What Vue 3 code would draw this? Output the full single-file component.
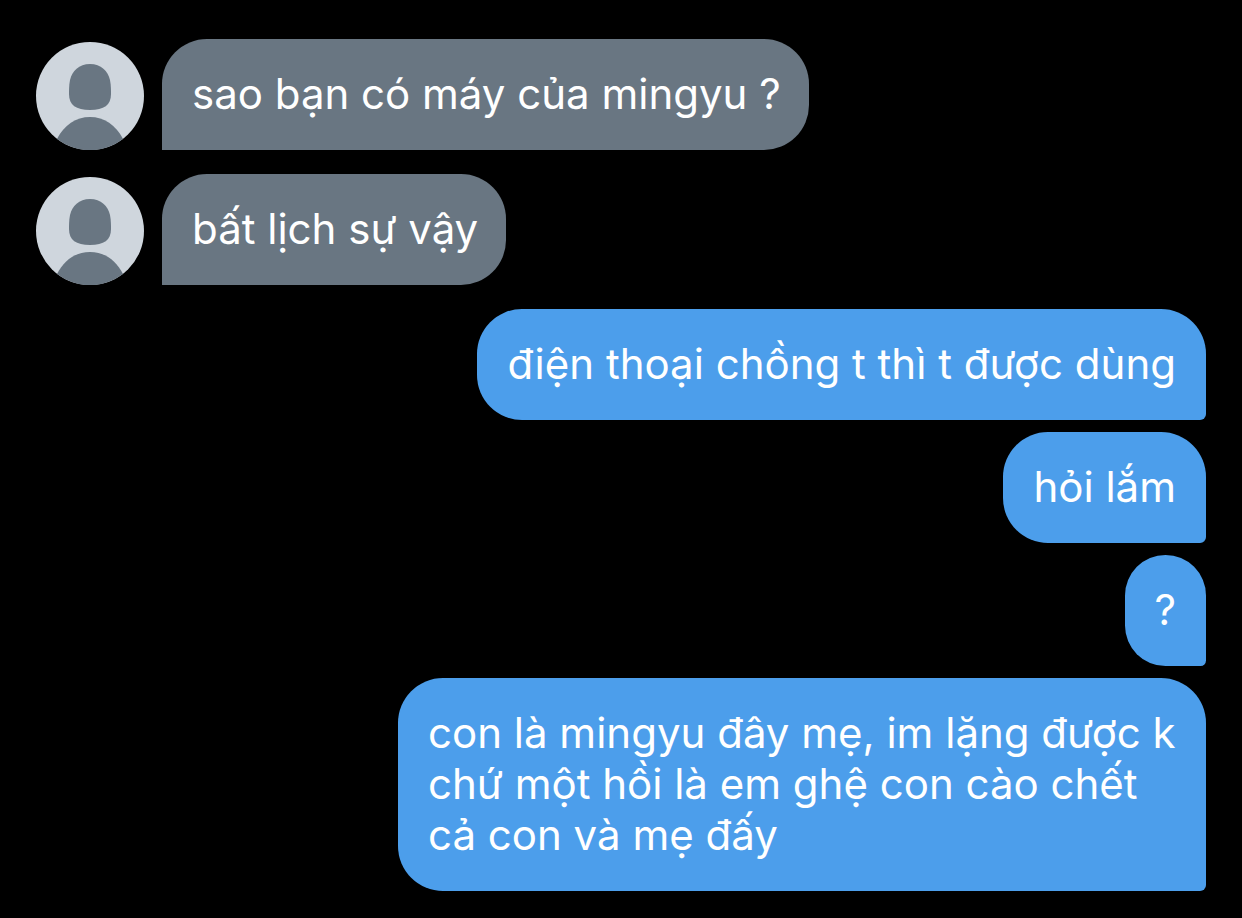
<script setup>
const messages = [
  { text: 'sao bạn có máy của mingyu ?', side: 'in' },
  { text: 'bất lịch sự vậy', side: 'in' },
  { text: 'điện thoại chồng t thì t được dùng', side: 'out' },
  { text: 'hỏi lắm', side: 'out' },
  { text: '?', side: 'out' },
  { text: 'con là mingyu đây mẹ, im lặng được k chứ một hồi là em ghệ con cào chết\ncả con và mẹ đấy', side: 'out' },
]
</script>

<template>
  <main class="chat">
    <div v-for="(m, i) in messages" :key="i" class="row" :class="m.side">
      <svg v-if="m.side === 'in'" class="avatar" viewBox="0 0 108 108" aria-hidden="true">
        <circle cx="54" cy="54" r="54" fill="#cfd6dd" />
        <path d="M54 22C65 22 72 29 74 38C75 43 75 48 75 52C75 63 68 68 54 68S33 63 33 52C33 48 33 43 34 38C36 29 43 22 54 22Z" fill="#697682" />
        <path d="M21 97C28 83 40 75 54 75S80 83 87 97A54 54 0 0 1 21 97Z" fill="#697682" />
      </svg>
      <p class="bubble">{{ m.text }}</p>
    </div>
  </main>
</template>

<style scoped>
.chat {
  box-sizing: border-box;
  min-height: 100vh;
  padding: 39px 36px 26px;
  background: #000;
  display: flex;
  flex-direction: column;
  gap: 12px;
  font-family: Inter, "Noto Sans", sans-serif;
}
.row {
  display: flex;
  align-items: flex-end;
  gap: 18px;
}
.in {
  margin-bottom: 12px;
}
.out {
  justify-content: flex-end;
}
.avatar {
  width: 108px;
  height: 108px;
  flex: none;
}
.bubble {
  box-sizing: border-box;
  margin: 0;
  padding: 29px 30px 31px;
  max-width: 808px;
  color: #fff;
  font-size: 42px;
  line-height: 51px;
  white-space: pre-line;
  border-radius: 45px;
}
.in .bubble {
  padding-right: 28px;
  background: #697682;
  border-bottom-left-radius: 0;
}
.out .bubble {
  background: #4c9eeb;
  border-bottom-right-radius: 6px;
}
</style>

<style>
body {
  background: #000;
}
</style>
